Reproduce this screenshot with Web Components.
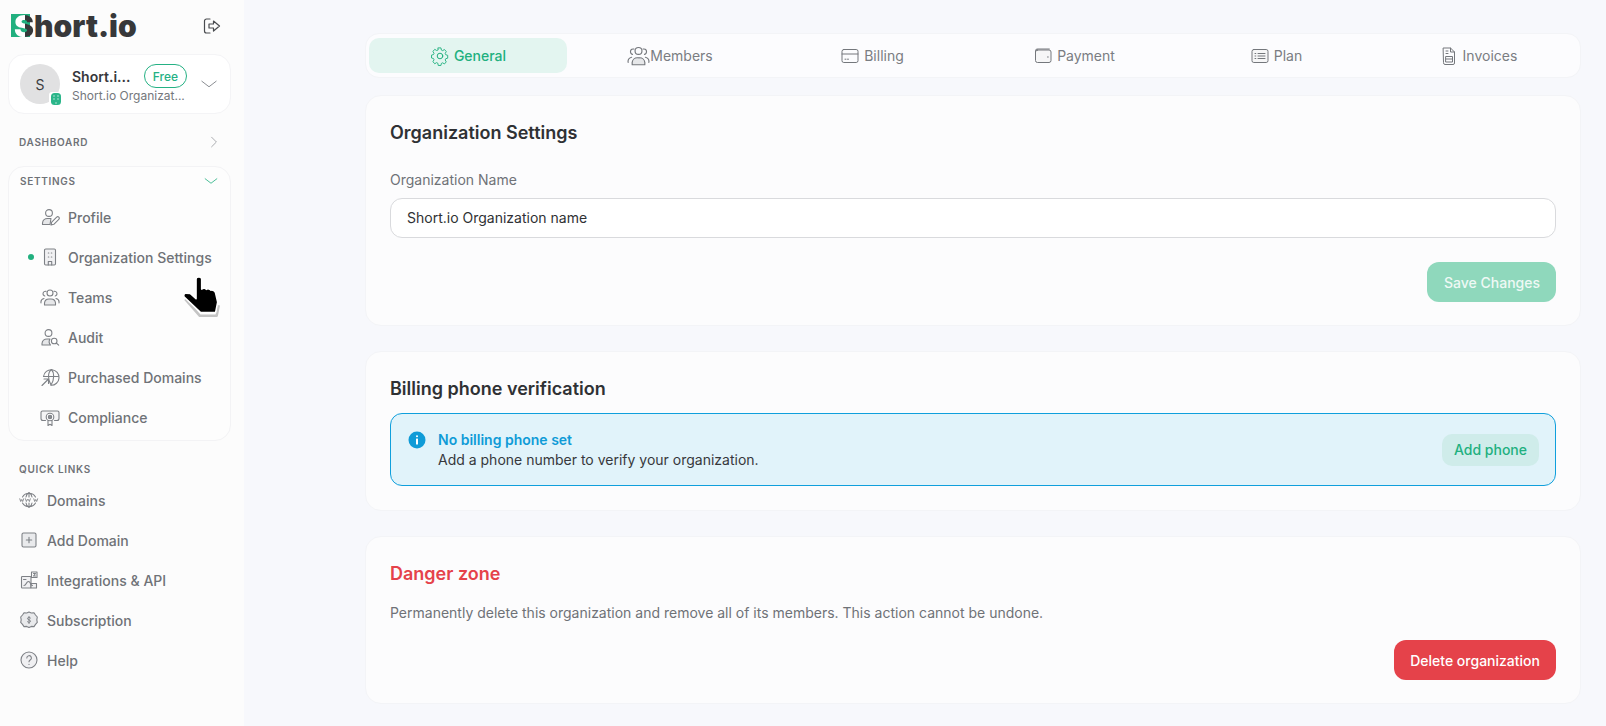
<!DOCTYPE html>
<html>
<head>
<meta charset="utf-8">
<style>
  html, body { margin: 0; height: 100%; background: #f7f8fc; font-family: Inter, "Liberation Sans", sans-serif; }
  body { overflow: hidden; }
  org-app { height: 726px; }
</style>
</head>
<body>
<org-app></org-app>
<script>
const FILL = '#e6e7e9';
const icons = {
  logout: '<path d="M9 3H5.500a2 2 0 0 0-2 2v10a2 2 0 0 0 2 2H9"/><path d="M12.500 5 18.500 10l-6 5v-3H8V8h4.500z"/>',
  profile: `<circle cx="9" cy="6" r="3.400"/><path d="M2.500 17.500v-1.500a5 5 0 0 1 5-4.500h3.500l-1 6z" fill="${FILL}"/><path d="M11 18l.7-2.800 5-5a1.400 1.400 0 0 1 2.100 2.100l-5 5z" fill="#fff"/>`,
  building: `<rect x="4.500" y="2" width="11" height="16" rx="1.200" fill="#f1f1f3"/><path d="M8.300 18v-3.500h3.400V18M8.300 6h.5M11.300 6h.5M8.300 10h.5M11.300 10h.5"/>`,
  team: `<circle cx="10" cy="6" r="3"/><path d="M4.800 9a2.200 2.200 0 1 1 1.200-4.600M15.200 9a2.200 2.200 0 1 0-1.200-4.600"/><path d="M4.500 18v-2a4.500 4.500 0 0 1 4.500-4h2a4.500 4.500 0 0 1 4.500 4v2z" fill="${FILL}"/><path d="M1 16a4 4 0 0 1 3-4.500M19 16a4 4 0 0 0-3-4.500"/>`,
  audit: `<circle cx="8.500" cy="6" r="3.400"/><path d="M2 18v-1.500a5 5 0 0 1 5-4.500h3a5 5 0 0 0 .5 6z" fill="${FILL}"/><circle cx="14.200" cy="14" r="2.800" fill="#fff"/><path d="M16.200 16l2.500 2.200"/>`,
  globe: '<path d="M3.500 9.500a7.800 7.800 0 1 1 7.500 8.800"/><path d="M3.500 9.500h15M11.500 2.500c-4 3-3.800 10 -.5 15.500M11.500 2.500c2.800 3 3.200 10 -.5 15.500"/><path d="M2 18.500l6-6M4 12h4.500v4.500" fill="#fff"/>',
  compliance: `<path d="M5.500 13.500H3a2 2 0 0 1-2-2V5.500C1 4.500 1.800 4 2.500 4h15c.7 0 1.500.5 1.500 1.500v6a2 2 0 0 1-2 2h-2.500" fill="#f4f4f5"/><path d="M8 13.500V18.500l2-1.200 2 1.200v-5" fill="#fff"/><circle cx="10" cy="10" r="3.800" fill="#fff"/><circle cx="10" cy="10" r="1.700" fill="#8a8d92"/>`,
  www: '<path d="M3.500 7a7.500 7.500 0 0 1 13 0M3.500 13a7.500 7.500 0 0 0 13 0M10 2.500V7M10 13v4.500M7 7c.3-2 1.300-3.500 3-4.500 1.700 1 2.700 2.500 3 4.500M7 13c.3 2 1.300 3.500 3 4.500 1.700-1 2.700-2.500 3-4.500"/><path d="M.8 8.800l.9 2.700 1-2 1 2 .9-2.700M6.500 8.800l.9 2.700 1-2 1 0 1 2 .9-2.700M14.800 8.800l.9 2.700 1-2 1 2 .9-2.700" stroke-width=".9"/>',
  plus: '<rect x="3" y="3" width="14" height="14" rx="1.500" fill="#e9eaec"/><path d="M10 7.300v5.400M7.300 10h5.400"/>',
  integrations: `<rect x="2.500" y="6.500" width="9.500" height="11.500" rx=".8" fill="#f1f1f3"/><path d="M12 13.500h5.500V18H12z" fill="#f1f1f3"/><path d="M12.500 2h5.500v5.500h-5.500z"/><path d="M4.500 9.500h2.500M5 15.500c2.500 0 2-4 4.500-4s1.500 4 4 4M14.500 3.500h2l-2 2.500h2"/>`,
  subscription: '<path d="M10 2l2.300 1 2.700-.2 1.500 2.200 1.800 2-.5 2.900.5 2.500-1.800 2-1.500 2.200-2.700-.2-2.300 1.100-2.300-1.100-2.700.2-1.500-2.200-1.800-2 .5-2.500-.5-2.900 1.800-2L5 2.800l2.700.2z" fill="#e9eaec"/><path d="M11.500 8c-1-1-3-.8-3 .6 0 1.600 3 .9 3 2.600 0 1.300-2 1.600-3 .6M10 6.500v7" stroke-width="1"/>',
  help: '<circle cx="10" cy="10" r="8" fill="#f0f0f2"/><path d="M7.800 8a2.300 2.300 0 1 1 3.400 2c-.8.500-1.200 1-1.200 1.800M10 14.300v.1"/>',
  gear: '<circle cx="10" cy="10" r="2.800"/><path d="M8.500 2h3l.5 2.300 1.400.6 2-1.200 2 2.200-1.200 2 .6 1.300 2.200.6v3l-2.200.6-.6 1.300 1.200 2-2 2.200-2-1.200-1.400.6-.5 2.200h-3L8 18.100l-1.400-.6-2 1.200-2-2.200 1.200-2-.6-1.300L1 12.600v-3l2.200-.6.600-1.300-1.200-2 2-2.200 2 1.200L8 4.300z" transform="translate(.6 0) scale(.9 .95)"/>',
  card: '<rect x="2" y="3.500" width="16" height="13" rx="1.800"/><path d="M2 8h16M5 13.200h1M7.500 13.200h1"/>',
  wallet: '<rect x="2.500" y="4" width="15.500" height="12.500" rx="2" fill="#f6f6f7"/><path d="M2.500 6V4.800A1.800 1.800 0 0 1 4.300 3h12M14.500 11h.8"/>',
  list: '<rect x="2" y="3.500" width="16" height="13" rx="1.800" fill="#f6f6f7"/><path d="M5 7.500h.8M5 10h.8M5 12.500h.8M8 7.500h7M8 10h7M8 12.500h7"/>',
  invoice: '<path d="M4.500 2h7l4 4v11a1.500 1.500 0 0 1-1.500 1.500H6A1.500 1.500 0 0 1 4.500 17z"/><path d="M11.500 2v4h4M7 5h2M7 7.500h2"/><rect x="7" y="10.500" width="6.500" height="5.500"/><path d="M7 13h6.500"/>',
  down: '<path d="M3.500 7.500 10 12.500l6.500-5"/>',
  right: '<path d="M7 4l6 6-6 6"/>'
};

function svg(name, size, color, width) {
  return `<svg width="${size}" height="${size}" viewBox="0 0 20 20" fill="none" stroke="${color}" stroke-width="${width || 1.100}" stroke-linecap="round" stroke-linejoin="round">${icons[name]}</svg>`;
}

class BrandLogo extends HTMLElement {
  connectedCallback() {
    this.attachShadow({ mode: 'open' }).innerHTML = `
      <style>
        :host { display: flex; align-items: center; height: 24px; font: 900 30px/24px Inter, sans-serif; color: #37383a; }
        .s { display: block; padding-left: 3px; background: linear-gradient(#21b07f, #21b07f) no-repeat 0 0 / 19px 23px; }
        .s span { display: block; background: linear-gradient(90deg, #fff 0 11px, #37383a 11px); -webkit-background-clip: text; background-clip: text; color: transparent; }
      </style>
      <span class="s"><span>S</span></span><span>hort.io</span>`;
  }
}
customElements.define('brand-logo', BrandLogo);

class OrgSwitcher extends HTMLElement {
  connectedCallback() {
    this.attachShadow({ mode: 'open' }).innerHTML = `
      <style>
        :host { display: flex; align-items: center; height: 60px; box-sizing: border-box; padding: 0 10px 0 11px; background: #fff; border: 1px solid #f4f4f6; border-radius: 16px; }
        .avatar { position: relative; width: 40px; height: 40px; border-radius: 50%; background: #e1e1e2; color: #3b3c3f; display: flex; align-items: center; justify-content: center; font-size: 14px; flex: none; }
        .mini { position: absolute; right: -2px; bottom: -2px; width: 13px; height: 14px; background: #fff; border-radius: 3px; display: flex; align-items: center; justify-content: center; }
        .mini svg { display: block; }
        .text { margin-left: 12px; width: 115px; flex: none; }
        .top { display: flex; align-items: center; height: 24px; justify-content: space-between; }
        .name { font-size: 14px; font-weight: 600; color: #37383c; }
        .free { box-sizing: border-box; width: 43px; height: 24px; border: 1px solid #25b184; border-radius: 12px; color: #25b184; font-size: 12px; font-weight: 500; display: flex; align-items: center; justify-content: center; }
        .sub { font-size: 12px; color: #74777c; line-height: 16px; white-space: nowrap; }
        .chev { margin-left: auto; display: flex; }
      </style>
      <div class="avatar">S<span class="mini"><svg width="10" height="12" viewBox="0 0 10 12"><rect width="10" height="12" rx="3.500" fill="#2bb68a"/><path d="M3 2.500v1M7 2.500v1M3 5.500v1M7 5.500v1M5 9.500v1" stroke="#fff" stroke-width="1.200"/></svg></span></div>
      <div class="text">
        <div class="top"><span class="name">Short.i...</span><span class="free">Free</span></div>
        <div class="sub">Short.io Organizat...</div>
      </div>
      <span class="chev">${svg('down', 22, '#8a8d92', .9)}</span>`;
  }
}
customElements.define('org-switcher', OrgSwitcher);

class NavItem extends HTMLElement {
  connectedCallback() {
    const icon = this.getAttribute('icon');
    this.attachShadow({ mode: 'open' }).innerHTML = `
      <style>
        :host { display: flex; align-items: center; height: 40px; font-size: 14px; font-weight: 500; color: #6f7277; position: relative; }
        .ic { width: 20px; height: 20px; display: flex; margin-right: 8px; flex: none; }
        .dot { position: absolute; left: -12px; width: 6px; height: 6px; border-radius: 50%; background: #21b07f; }
      </style>
      ${this.hasAttribute('active') ? '<span class="dot"></span>' : ''}
      <span class="ic">${svg(icon, 20, '#7e8186')}</span><slot></slot>`;
  }
}
customElements.define('nav-item', NavItem);

class NavSection extends HTMLElement {
  connectedCallback() {
    const open = this.hasAttribute('open');
    this.attachShadow({ mode: 'open' }).innerHTML = `
      <style>
        :host { display: block; }
        :host([boxed]) { border: 1px solid #f3f3f5; border-radius: 16px; background: #fdfdfd; padding: 4px 0; height: 275px; box-sizing: border-box; }
        .head { display: flex; align-items: center; justify-content: space-between; height: 20px; padding: 0 9px 0 11px; font-size: 10px; font-weight: 600; letter-spacing: .7px; color: #6f7277; text-transform: uppercase; }
        :host([boxed]) .head { padding: 0 10px 0 11px; }
        .head svg { display: block; }
        .rows { display: block; padding: 1px 0 0 11px; }
        :host([boxed]) .rows { padding: 6px 0 0 31px; }
      </style>
      <div class="head"><span>${this.getAttribute('title')}</span>${this.hasAttribute('chevron') ? svg(open ? 'down' : 'right', open ? 18 : 16, open ? '#21b07f' : '#8a8d92', .9) : ''}</div>
      <div class="rows"><slot></slot></div>`;
  }
}
customElements.define('nav-section', NavSection);

class TabBar extends HTMLElement {
  connectedCallback() {
    this.attachShadow({ mode: 'open' }).innerHTML = `
      <style>
        :host { display: grid; grid-template-columns: repeat(6, 1fr); gap: 4px; height: 45px; box-sizing: border-box; padding: 4px 3px; background: #fcfcfe; border: 1px solid #f3f4f7; border-radius: 14px; }
      </style>
      <slot></slot>`;
  }
}
customElements.define('tab-bar', TabBar);

class TabItem extends HTMLElement {
  connectedCallback() {
    const active = this.hasAttribute('active');
    const wide = this.hasAttribute('wide');
    this.attachShadow({ mode: 'open' }).innerHTML = `
      <style>
        :host { display: flex; align-items: center; justify-content: center; gap: ${wide ? 0 : 4}px; font-size: 14px; color: #7a7d82; border-radius: 10px; }
        :host([active]) { background: #e3f5f0; color: #21b07f; font-weight: 500; }
        svg { display: block; }
      </style>
      ${svg(this.getAttribute('icon'), wide ? 23 : 20, active ? '#21b07f' : '#74777c', 1)}<slot></slot>`;
  }
}
customElements.define('tab-item', TabItem);

class PanelCard extends HTMLElement {
  connectedCallback() {
    this.attachShadow({ mode: 'open' }).innerHTML = `
      <style>
        :host { display: block; box-sizing: border-box; padding: 24px; background: #fcfcfd; border: 1px solid #f3f4f7; border-radius: 16px; }
        h2 { margin: 0; font-size: 18px; line-height: 26px; font-weight: 600; color: #2f3134; }
        :host([danger]) h2 { color: #e5424a; }
      </style>
      <h2>${this.getAttribute('heading')}</h2>
      <slot></slot>`;
  }
}
customElements.define('panel-card', PanelCard);

class TextField extends HTMLElement {
  connectedCallback() {
    this.attachShadow({ mode: 'open' }).innerHTML = `
      <style>
        :host { display: block; margin-top: 24px; }
        label { display: block; font-size: 14px; line-height: 20px; color: #6f7277; }
        .box { margin-top: 8px; height: 40px; box-sizing: border-box; border: 1px solid #d9dadd; border-radius: 12px; background: #fff; padding: 0 16px 1px; display: flex; align-items: center; font-size: 14px; color: #2f3134; }
      </style>
      <label>${this.getAttribute('label')}</label>
      <div class="box">${this.getAttribute('value')}</div>`;
  }
}
customElements.define('text-field', TextField);

class ActionButton extends HTMLElement {
  connectedCallback() {
    this.attachShadow({ mode: 'open' }).innerHTML = `
      <style>
        :host { display: inline-flex; align-items: center; justify-content: center; height: 40px; padding: 0 16px; border-radius: 12px; font-size: 14px; font-weight: 500; color: #fff; }
        :host([kind=save]) { background: #8fd8bc; color: #eef9f5; padding-left: 17px; }
        :host([kind=danger]) { background: #e5424a; }
        :host([kind=soft]) { background: #cfecea; color: #21b07f; height: 32px; padding: 0 12px; border-radius: 10px; }
      </style>
      <slot></slot>`;
  }
}
customElements.define('action-button', ActionButton);

class InfoAlert extends HTMLElement {
  connectedCallback() {
    this.attachShadow({ mode: 'open' }).innerHTML = `
      <style>
        :host { display: flex; align-items: center; height: 73px; box-sizing: border-box; margin-top: 11px; padding: 0 16px 0 17px; background: #e1f3fa; border: 1px solid #0f9fdc; border-radius: 12px; }
        svg { flex: none; margin-right: 12px; margin-top: -20px; }
        .t { flex: 1; font-size: 14px; line-height: 20px; color: #37383c; }
        b { display: block; font-weight: 600; color: #0f9bd7; }
      </style>
      <svg width="18" height="18" viewBox="0 0 18 18"><circle cx="9" cy="9" r="8.500" fill="#0f9bd7"/><rect x="8" y="7.500" width="2" height="6" rx=".5" fill="#fff"/><rect x="8" y="4.200" width="2" height="2" rx="1" fill="#fff"/></svg>
      <div class="t"><b>No billing phone set</b>Add a phone number to verify your organization.</div>
      <slot></slot>`;
  }
}
customElements.define('info-alert', InfoAlert);

class HandCursor extends HTMLElement {
  connectedCallback() {
    this.attachShadow({ mode: 'open' }).innerHTML = `
      <style>:host { position: absolute; left: 180px; top: 275px; width: 44px; height: 46px; display: block; } svg { display: block; }</style>
      <svg width="44" height="46" viewBox="-2 -2 42 44">
        <path d="M3 21l14 16h16l2-10" fill="none" stroke="#c4c4c4" stroke-width="2.500" stroke-linejoin="round"/>
        <path d="M13.300 2c0-2.800 5.400-2.800 5.400 0v9.500c1.400-1.200 3.500-1 4.400.2 1.400-.9 3.500-.5 4.300.8 1.700-.5 4 .4 4.600 2.700L34 24l-2 10H17.700L2 19c-1.200-1.600 0-3.600 1.500-3.500l4.200.2 5.600 5z" fill="#000" stroke="#fff" stroke-width="1.500" stroke-linejoin="round"/>
      </svg>`;
  }
}
customElements.define('hand-cursor', HandCursor);

class OrgApp extends HTMLElement {
  connectedCallback() {
    this.attachShadow({ mode: 'open' }).innerHTML = `
      <style>
        :host { display: flex; height: 100%; position: relative; font-family: Inter, "Liberation Sans", sans-serif; }
        aside { width: 244px; flex: none; background: #fcfcfc; padding: 13px 13px 0 8px; box-sizing: border-box; display: flex; flex-direction: column; }
        .brand { display: flex; align-items: center; justify-content: space-between; padding: 0 10px 0 3px; height: 25px; margin-bottom: 16px; }
        .brand svg { display: block; }
        main { flex: 1; padding: 33px 25px 0 121px; display: flex; flex-direction: column; }
        tab-bar { margin-bottom: 17px; }
        panel-card + panel-card { margin-top: 25px; }
        .c1 { height: 231px; } .c2 { height: 160px; } .c3 { height: 168px; }
        .end { display: flex; justify-content: flex-end; }
        .c1 .end { margin-top: 24px; }
        .note { margin-top: 16px; font-size: 14px; line-height: 20px; color: #6f7277; }
        .c3 .end { margin-top: 17px; }
        .dash { margin-top: 18px; }
        .settings { margin-top: 13px; }
        .quick { margin-top: 18px; }
      </style>
      <aside>
        <div class="brand"><brand-logo></brand-logo>${svg('logout', 20, '#4a4c50', 1.200)}</div>
        <org-switcher></org-switcher>
        <nav-section class="dash" title="Dashboard" chevron></nav-section>
        <nav-section class="settings" title="Settings" chevron open boxed>
          <nav-item icon="profile">Profile</nav-item>
          <nav-item icon="building" active>Organization Settings</nav-item>
          <nav-item icon="team">Teams</nav-item>
          <nav-item icon="audit">Audit</nav-item>
          <nav-item icon="globe">Purchased Domains</nav-item>
          <nav-item icon="compliance">Compliance</nav-item>
        </nav-section>
        <nav-section class="quick" title="Quick links">
          <nav-item icon="www">Domains</nav-item>
          <nav-item icon="plus">Add Domain</nav-item>
          <nav-item icon="integrations">Integrations &amp; API</nav-item>
          <nav-item icon="subscription">Subscription</nav-item>
          <nav-item icon="help">Help</nav-item>
        </nav-section>
      </aside>
      <main>
        <tab-bar>
          <tab-item icon="gear" active>General</tab-item>
          <tab-item icon="team" wide>Members</tab-item>
          <tab-item icon="card">Billing</tab-item>
          <tab-item icon="wallet">Payment</tab-item>
          <tab-item icon="list">Plan</tab-item>
          <tab-item icon="invoice">Invoices</tab-item>
        </tab-bar>
        <panel-card class="c1" heading="Organization Settings">
          <text-field label="Organization Name" value="Short.io Organization name"></text-field>
          <div class="end"><action-button kind="save">Save Changes</action-button></div>
        </panel-card>
        <panel-card class="c2" heading="Billing phone verification">
          <info-alert><action-button kind="soft">Add phone</action-button></info-alert>
        </panel-card>
        <panel-card class="c3" heading="Danger zone" danger>
          <div class="note">Permanently delete this organization and remove all of its members. This action cannot be undone.</div>
          <div class="end"><action-button kind="danger">Delete organization</action-button></div>
        </panel-card>
      </main>
      <hand-cursor></hand-cursor>`;
  }
}
customElements.define('org-app', OrgApp);
</script>
</body>
</html>
